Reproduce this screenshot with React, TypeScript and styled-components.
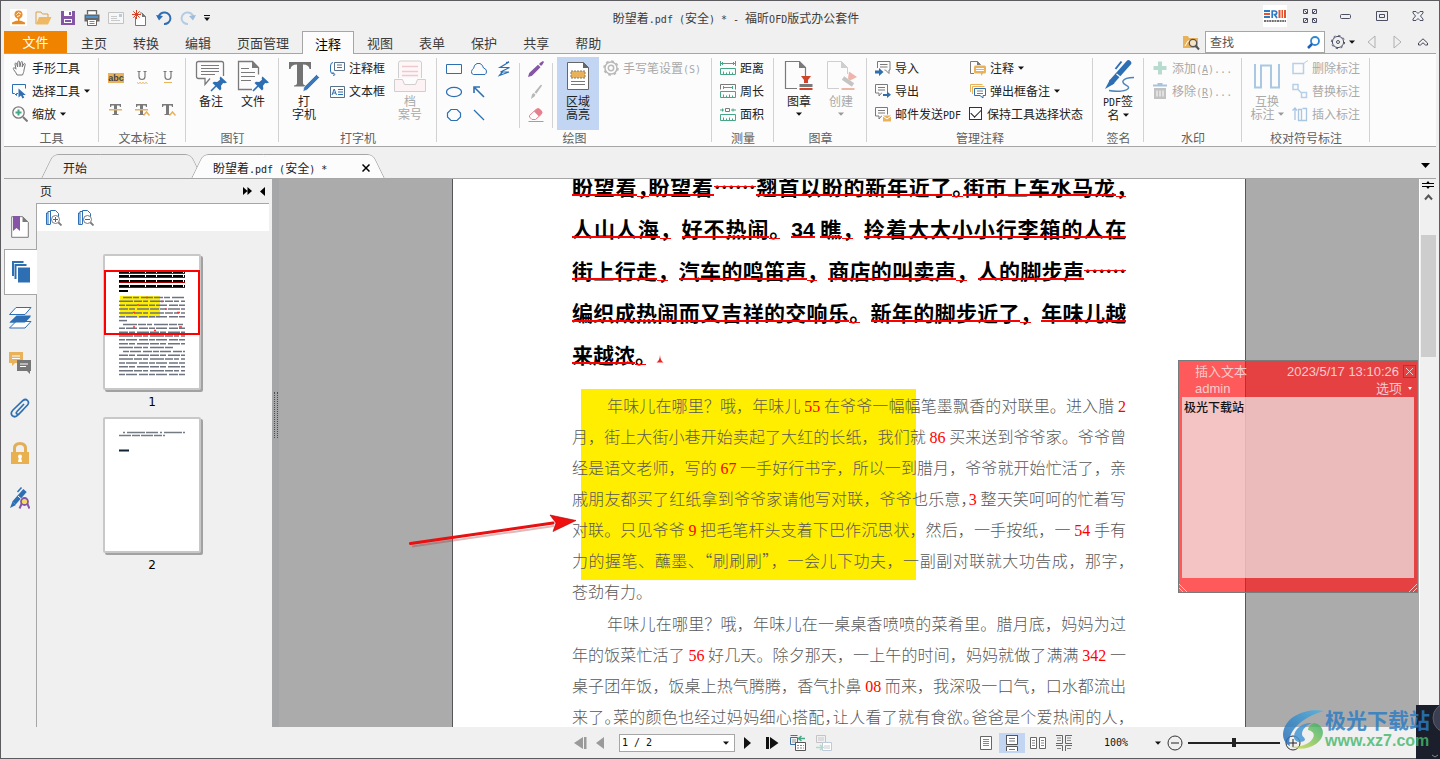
import React from "react";
import styled, { createGlobalStyle, css } from "styled-components";

const BLUE = "#2e6fb4";
const GRAY = "#7a7a7a";
const GOLD = "#e9b25a";
const GREEN = "#46a688";
const PURPLE = "#8656a6";
const RED = "#d0452a";
const LINE = "#a6a6a6";
const CHROME = "#f0f0f0";

const Global = createGlobalStyle`
  * { box-sizing: border-box; }
  html, body { margin: 0; height: 100%; }
  body {
    font-family: "Noto Sans CJK SC", "Noto Sans", sans-serif;
    font-size: 12px;
    line-height: 16px;
    color: #222;
    overflow: hidden;
  }
  button, input, select, textarea { font: inherit; color: inherit; margin: 0; }
  button { background: none; border: 0; padding: 0; cursor: default; }
  svg { display: block; flex: none; }
`;

/* ---------- text and icon helpers ---------- */

const Half = styled.span`
  font-family: "DejaVu Sans Mono", monospace;
  font-size: 10px;
  line-height: 1;
  white-space: pre;
`;

const Mixed = ({ children }: { children: string }) => (
  <span>
    {children.split(/([\x20-\x7e]+)/).map((part, i) =>
      i % 2 ? <Half key={i}>{part}</Half> : part
    )}
  </span>
);

type IconProps = { w?: number; h?: number; children: React.ReactNode };
const Icon = ({ w = 16, h = w, children }: IconProps) => (
  <svg width={w} height={h} viewBox={`0 0 ${w} ${h}`} fill="none" aria-hidden="true">
    {children}
  </svg>
);

const Caret = ({ color = "#111" }: { color?: string }) => (
  <Icon w={6} h={4}>
    <path d="M0 .5h6L3 3.8z" fill={color} />
  </Icon>
);

/* ---------- window frame ---------- */

const Window = styled.div`
  position: relative;
  display: flex;
  flex-direction: column;
  height: 100vh;
  padding: 0 3px;
  border: 1px solid #5c5c60;
  background: ${CHROME};
`;

const TitleBar = styled.header`
  display: flex;
  align-items: center;
  justify-content: space-between;
  height: 30px;
  padding-left: 6px;
  color: #3c3c3c;
`;

const QuickBar = styled.div`
  display: flex;
  align-items: center;
  gap: 8px;
  flex: 1;
  padding-top: 3px;
`;

const Title = styled.h1`
  margin: 0;
  padding: 3px 0 0 26px;
  font-size: 12px;
  font-weight: 400;
  white-space: nowrap;
`;

const WindowButtons = styled.div`
  display: flex;
  justify-content: flex-end;
  flex: 1;
  button {
    display: grid;
    place-items: center;
    width: 36px;
    height: 28px;
  }
`;

const Brand = styled.div`
  display: grid;
  place-items: center;
  width: 24px;
  height: 22px;
  margin: 3px 5px 0 0;
  background: #fff;
`;

/* ---------- menu tabs ---------- */

const MenuBar = styled.nav`
  display: flex;
  height: 23px;
  border-bottom: 1px solid ${LINE};
`;

const FileTab = styled.button`
  && { color: #fff; }
  width: 63px;
  height: 22px;
  margin-right: 1px;
  background: #f08300;
  font-size: 13px;
`;

const MenuTab = styled.button<{ $active?: boolean }>`
  height: 22px;
  padding: 2px 13px 0;
  font-size: 13px;
  color: #3c3c3c;
  white-space: nowrap;
  ${(p) =>
    p.$active &&
    css`
      height: 23px;
      padding: 1px 12px 0;
      background: #fcfcfc;
      border: 1px solid ${LINE};
      border-bottom: 0;
      color: #000;
    `}
`;

const SearchArea = styled.div`
  display: flex;
  align-items: center;
  margin-left: auto;
`;

const SearchBox = styled.label`
  display: flex;
  align-items: center;
  width: 120px;
  height: 22px;
  margin: 0 5px;
  padding: 0 4px;
  background: #fff;
  border: 1px solid ${LINE};
  input {
    flex: 1;
    min-width: 0;
    padding: 0;
    border: 0;
    outline: 0;
    background: none;
  }
  input::placeholder { color: #555; }
`;

const Nav = styled.button<{ $w?: number }>`
  display: grid;
  place-items: center;
  width: ${(p) => p.$w ?? 26}px;
  height: 20px;
`;

/* ---------- ribbon ---------- */

const RibbonBar = styled.section`
  display: flex;
  height: 93px;
  padding-top: 3px;
  background: #fcfcfc;
  border-bottom: 1px solid ${LINE};
`;

const GroupBox = styled.div<{ $w: number }>`
  display: flex;
  flex-direction: column;
  flex: none;
  width: ${(p) => p.$w}px;
  background: linear-gradient(#d2d2d2, #d2d2d2) right 0 top 1px / 1px 84px no-repeat;
`;

const GroupBody = styled.div`
  display: flex;
  height: 73px;
  padding-left: 4px;
`;

const GroupLabel = styled.div`
  color: #606060;
  text-align: center;
`;

const Group = ({ w, label, children }: { w: number; label: string; children: React.ReactNode }) => (
  <GroupBox $w={w}>
    <GroupBody>{children}</GroupBody>
    <GroupLabel>{label}</GroupLabel>
  </GroupBox>
);

const Column = styled.div<{ $w?: number; $pad?: number }>`
  display: flex;
  flex-direction: column;
  width: ${(p) => (p.$w ? `${p.$w}px` : "auto")};
  padding-left: ${(p) => p.$pad ?? 4}px;
`;

const RowButton = styled.button`
  display: flex;
  align-items: center;
  gap: 4px;
  height: 23px;
  padding-bottom: 1px;
  white-space: nowrap;
  &:disabled { color: #a9a9a9; }
`;

const Row = ({
  icon,
  text,
  caret,
  disabled,
}: {
  icon: React.ReactNode;
  text: React.ReactNode;
  caret?: boolean;
  disabled?: boolean;
}) => (
  <RowButton disabled={disabled}>
    {icon}
    <span>{text}</span>
    {caret && <Caret />}
  </RowButton>
);

const Big = styled.button<{ $on?: boolean }>`
  display: flex;
  flex-direction: column;
  align-items: center;
  width: 42px;
  height: 74px;
  padding-top: 3px;
  line-height: 13px;
  background: ${(p) => (p.$on ? "#c2d5f2" : "transparent")};
  &:disabled { color: #a9a9a9; }
  > svg:first-child { margin-bottom: 2px; }
`;

const Inline = styled.span`
  display: flex;
  align-items: center;
  gap: 3px;
  min-height: 13px;
`;

const IconGrid = styled.div<{ $cols: number; $row: number; $col?: number; $top?: number }>`
  display: grid;
  grid-template-columns: repeat(${(p) => p.$cols}, ${(p) => p.$col ?? 26}px);
  grid-auto-rows: ${(p) => p.$row}px;
  align-content: start;
  padding-top: ${(p) => p.$top ?? 0}px;
  button { display: grid; place-items: center; }
`;

const Divider = styled.div`
  width: 1px;
  height: 65px;
  margin: 6px 3px 0;
  background: #d2d2d2;
`;

const Check = styled.label`
  display: flex;
  align-items: center;
  gap: 5px;
  height: 23px;
  margin-left: -1px;
  padding-bottom: 2px;
  white-space: nowrap;
  input {
    appearance: none;
    display: grid;
    place-items: center;
    width: 13px;
    height: 13px;
    border: 1px solid #333;
    background: #fff;
  }
  input:checked::after {
    content: "";
    width: 9px;
    height: 5px;
    margin-top: -3px;
    border: solid #222;
    border-width: 0 0 1px 1px;
    transform: rotate(-45deg);
  }
`;

/* ---------- document tabs ---------- */

const DocTabs = styled.div`
  display: flex;
  align-items: flex-end;
  height: 32px;
  padding-left: 43px;
  border-bottom: 1px solid ${LINE};
`;

const DocTab = styled.div<{ $active?: boolean; $w: number }>`
  position: relative;
  display: flex;
  align-items: center;
  justify-content: space-between;
  width: ${(p) => p.$w}px;
  height: 24px;
  padding: 3px 9px 0 16px;
  z-index: ${(p) => (p.$active ? 1 : 0)};
  isolation: isolate;
  &::before,
  &::after {
    content: "";
    position: absolute;
    z-index: -1;
    top: 0;
    bottom: 0;
    width: 60%;
    background: ${(p) => (p.$active ? "#fcfcfc" : CHROME)};
    border-top: 1px solid ${LINE};
  }
  &::before {
    left: 0;
    border-left: 1px solid ${LINE};
    border-top-left-radius: 6px;
    transform: skewX(-26deg);
  }
  &::after {
    right: 0;
    border-right: 1px solid ${LINE};
    border-top-right-radius: 6px;
    transform: skewX(26deg);
  }
`;

const TabMenu = styled.button`
  margin: 0 6px 10px auto;
`;

/* ---------- main area ---------- */

const Main = styled.main`
  display: flex;
  flex: 1;
  min-height: 0;
`;

const Rail = styled.nav`
  display: flex;
  flex-direction: column;
  width: 32px;
  padding-top: 25px;
`;

const RailButton = styled.button<{ $active?: boolean }>`
  display: grid;
  place-items: center;
  height: 45px;
  ${(p) =>
    p.$active &&
    css`
      position: relative;
      z-index: 1;
      width: 33px;
      height: 46px;
      background: #fff;
      border: 1px solid ${LINE};
      border-right: 0;
    `}
`;

const Panel = styled.aside`
  display: flex;
  flex-direction: column;
  width: 236px;
  padding-right: 3px;
`;

const PanelHead = styled.div`
  display: flex;
  align-items: center;
  height: 24px;
  padding: 0 4px;
  span { flex: 1; }
  button { margin-left: 8px; }
`;

const PanelBody = styled.div`
  flex: 1;
  border: solid ${LINE};
  border-width: 1px 0 0 1px;
`;

const PanelTools = styled.div`
  display: flex;
  align-items: center;
  gap: 16px;
  height: 27px;
  padding-left: 9px;
  background: #fff;
`;

const Thumbs = styled.div`
  display: flex;
  flex-direction: column;
  align-items: center;
  padding: 23px 2px 0 0;
`;

const Thumb = styled.figure`
  margin: 0;
  font-family: "DejaVu Sans", sans-serif;
  text-align: center;
  figcaption { height: 27px; line-height: 24px; color: #000; }
`;

const ThumbPage = styled.div`
  position: relative;
  width: 98px;
  height: 136px;
  background: #fff;
  border: 2px solid #c8c8c8;
  border-radius: 2px;
  box-shadow: 2px 2px 0 #a2a2a2;
`;

const ViewFrame = styled.div`
  position: absolute;
  left: -1px;
  top: 14px;
  width: 96px;
  height: 65px;
  border: 2px solid #f00;
`;

const Splitter = styled.div`
  display: flex;
  align-items: center;
  justify-content: center;
  width: 7px;
  padding-bottom: 76px;
  background: #a5a6a8;
`;

const Grip = styled.div`
  width: 4px;
  height: 46px;
  border: dotted #4c4d51;
  border-width: 0 1px;
`;

const Viewer = styled.div`
  position: relative;
  flex: 1;
  min-width: 0;
  overflow: hidden;
  background: #ababab;
`;

const Page = styled.article`
  position: relative;
  width: 794px;
  min-height: 1123px;
  margin: -14px auto 0;
  padding: 0 119px;
  background: #fff;
  border: solid #55565a;
  border-width: 0 1px;
`;

const Highlight = styled.div`
  position: absolute;
  left: 128px;
  top: 224px;
  width: 335px;
  height: 191px;
  background: #ffee00;
`;

const Arrow = styled.div`
  position: absolute;
  left: -44px;
  top: 347px;
`;

const Lead = styled.p`
  margin: 0 0 15px;
  font-size: 21px;
  font-weight: 700;
  line-height: 42px;
  color: #000;
`;

const Body = styled.p`
  position: relative;
  margin: 0 0 1px;
  font-size: 16px;
  font-weight: 300;
  line-height: 31px;
  color: #585858;
`;

const Line = styled.span<{ $indent?: boolean; $end?: boolean }>`
  display: block;
  white-space: nowrap;
  padding-left: ${(p) => (p.$indent ? 35 : 0)}px;
  text-align: ${(p) => (p.$end ? "left" : "justify")};
  text-align-last: ${(p) => (p.$end ? "left" : "justify")};
`;

const Glyph = styled.span<{ $kind: "word" | "stop" | "tight" | "dots" }>`
  position: relative;
  &::after {
    content: "";
    position: absolute;
    left: 0;
    right: ${(p) => (p.$kind === "stop" ? "50%" : "0")};
    bottom: ${(p) => (p.$kind === "word" ? 5 : p.$kind === "dots" ? 14 : 4)}px;
    height: ${(p) => (p.$kind === "word" ? 2 : 1)}px;
    background: #f00;
  }
`;

const TightStop = styled.span`
  font-feature-settings: "halt";
`;

const BoldNumber = styled.span`
  font-family: "Liberation Sans", Arial, sans-serif;
  font-weight: 700;
  line-height: 1;
`;

const Num = styled.span`
  font-family: "Liberation Serif", "Times New Roman", serif;
  font-weight: 400;
  line-height: 1;
  color: #f00;
`;

const InsertMark = styled.span`
  display: inline-block;
  line-height: 1;
`;

const LeadLine = ({ text, end, tight }: { text: string; end?: boolean; tight?: boolean }) => (
  <Line $end={end}>
    {(text.match(/\d+| |./g) || []).map((c, i) => {
      if (c === " ") return " ";
      const stop = /[，。]/.test(c);
      const kind = stop ? (tight ? "tight" : "stop") : c === "…" ? "dots" : "word";
      const inner = /\d/.test(c) ? (
        <BoldNumber>{c}</BoldNumber>
      ) : kind === "tight" ? (
        <TightStop>{c}</TightStop>
      ) : (
        c
      );
      return (
        <Glyph key={i} $kind={kind}>
          {inner}
        </Glyph>
      );
    })}
    {end && (
      <InsertMark>
        <Icon w={8} h={8}>
          <path d="M4 0c.4 4 1.2 6 3.5 7.5h-7C2.8 6 3.6 4 4 0z" fill="#e22" />
        </Icon>
      </InsertMark>
    )}
  </Line>
);

/* A tilde before a punctuation mark sets it half-width. */
const TextLine = ({ text, indent, end }: { text: string; indent?: boolean; end?: boolean }) => (
  <Line $indent={indent} $end={end}>
    {(text.match(/\d+|~.|[^\d~]+/g) || []).map((part, i) =>
      /^\d/.test(part) ? (
        <Num key={i}>{part}</Num>
      ) : part[0] === "~" ? (
        <TightStop key={i}>{part[1]}</TightStop>
      ) : (
        part
      )
    )}
  </Line>
);

/* ---------- sticky note ---------- */

const Note = styled.section`
  position: absolute;
  right: 1px;
  top: 181px;
  display: flex;
  flex-direction: column;
  width: 240px;
  height: 233px;
  padding: 2px 3px 14px;
  border: 1px solid #777b7b;
  background: rgba(255, 20, 22, 0.7);
  color: #f6cccc;
  font-family: "Liberation Sans", "Noto Sans CJK SC", sans-serif;
  font-size: 13px;
`;

const NoteRow = styled.div`
  display: flex;
  align-items: center;
  height: 17px;
  padding-left: 13px;
  span { flex: 1; }
  button { display: flex; align-items: center; gap: 6px; margin-right: 2px; }
`;

const CloseBox = styled.button`
  && { margin: 0 -2px 0 4px; padding: 1px; border: 1px solid #6e5050; }
`;

const NoteText = styled.textarea`
  flex: 1;
  padding: 2px;
  border: 0;
  outline: 0;
  resize: none;
  background: rgba(238, 255, 255, 0.64);
  && {
    color: #111;
    font: 500 12px/16px "Noto Sans CJK SC", sans-serif;
  }
`;

const Corners = styled.div`
  position: absolute;
  left: 0;
  right: 0;
  bottom: 0;
  display: flex;
  justify-content: space-between;
  svg:first-child { transform: scaleX(-1); }
`;

/* ---------- scroll bar ---------- */

const Scroll = styled.div`
  display: flex;
  flex-direction: column;
  align-items: center;
  width: 17px;
  background: ${CHROME};
  border-left: 1px solid #fff;
  > svg { margin-top: 2px; }
`;

const ScrollThumb = styled.div`
  width: 15px;
  height: 122px;
  margin-top: 32px;
  background: #cdcdcd;
`;

/* ---------- status bar ---------- */

const Status = styled.footer`
  display: flex;
  align-items: center;
  justify-content: space-between;
  height: 31px;
  padding: 0 135px 0 570px;
`;

const StatusGroup = styled.div`
  display: flex;
  align-items: center;
`;

const NextButton = styled.button`
  margin-right: 7px;
`;

const PageSelect = styled.label`
  display: flex;
  align-items: center;
  width: 116px;
  height: 18px;
  margin: 0 9px 0 6px;
  padding: 0 5px 0 2px;
  background: #fff;
  border: 1px solid ${LINE};
`;

const Select = styled.select`
  appearance: none;
  flex: 1;
  border: 0;
  outline: 0;
  padding: 0;
  background: none;
  && {
    font-family: "DejaVu Sans Mono", monospace;
    font-size: 10px;
    color: #111;
  }
`;

const ZoomSelect = styled.label`
  display: flex;
  align-items: center;
  width: 57px;
  margin: 0 6px 0 27px;
`;

const ModeButton = styled.button<{ $on?: boolean }>`
  display: grid;
  place-items: center;
  width: 26px;
  height: 20px;
  background: ${(p) => (p.$on ? "#c2d5f2" : "transparent")};
`;

const Slider = styled.input`
  appearance: none;
  width: 92px;
  height: 12px;
  margin: 0 5px;
  background: linear-gradient(#222, #222) center / 100% 2px no-repeat;
  &::-webkit-slider-thumb {
    appearance: none;
    width: 4px;
    height: 9px;
    background: #222;
  }
`;

/* ---------- watermark ---------- */

const Dock = styled.div`
  position: absolute;
  right: -1px;
  bottom: -1px;
  width: 24px;
  height: 54px;
  overflow: hidden;
  background: #1b1f2c;
  z-index: 2;
`;

const Watermark = styled.div`
  position: absolute;
  right: 9px;
  bottom: 6px;
  display: flex;
  align-items: center;
  z-index: 3;
  white-space: nowrap;
  opacity: 0.82;
  strong {
    display: block;
    font-size: 21px;
    line-height: 22px;
    color: #2b7cc4;
  }
  em {
    display: block;
    font: 700 16px/22px "Liberation Sans", Arial, sans-serif;
    color: #45b86c;
  }
`;

/* ---------- icons ---------- */

const note = (x = 0, color = GRAY) => (
  <path
    d={`M${x + 1.5} 1.5h12v8.5h-6l-2.5 3v-3h-3.5z M${x + 4} 4.5h7 M${x + 4} 7h7`}
    stroke={color}
  />
);

const noteFlipped = (
  <path d="M2.500 8V1.500h12.500v8.500h-1v3.500l-3.500-3.500H9.500 M5 4.500h7.500 M5 7h7.500" stroke={GRAY} />
);

const pin = (
  <g fill={BLUE}>
    <path d="M25.500 16.500l6.500 6-2.200.8-1.600-.2-2.200 2.600.3 3.300-1.300 1.500-7.500-7.500 1.500-1.300 3.200.4 2.800-2.300-.3-1.800z" />
    <path d="M21 26l-5 5" stroke={BLUE} strokeWidth="1.600" />
  </g>
);

const Ruler = ({ kind }: { kind: number }) => (
  <Icon>
    <path d="M.5 8.500h15v6H.5z M3.500 11.500v3 M6.500 12.500v2 M9.500 11.500v3 M12.500 12.500v2" stroke={GREEN} />
    {kind === 0 && <path d="M.5 1v5 M15.500 1v5 M1 3.500h14 M3 2L1.500 3.500 3 5 M13 2l1.500 1.500L13 5" stroke={GREEN} />}
    {kind === 1 && (
      <>
        <path d="M.5 6.500v-5h15v5" stroke={GRAY} />
        <path d="M3 4.500h10 M3.500 3v3 M12.500 3v3" stroke={GREEN} />
      </>
    )}
    {kind === 2 && (
      <>
        <path d="M5.500 2.500h4v3h-4z" stroke={GRAY} />
        <path d="M0 4h4 M2.500 2.500v3 M11 4h5 M13 2.500v3" stroke={GREEN} />
      </>
    )}
  </Icon>
);

const QuickIcons = () => (
  <>
    <button aria-label="应用">
      <Icon w={17} h={17}>
        <path d="M0 0h17v17H0z" fill="#fff" />
        <path d="M4.500 5.500a4 4 0 018 0c0 2-1 4-4 4.500-3-.5-4-2.500-4-4.500z" fill="#ec8f2c" />
        <path d="M6.500 5.500l2-2 2.500 1.500M7 7.500l3-1" stroke="#fff" />
        <path d="M8 9h1.500v3H8z M2 13.500l4-1.700h5l4 1.700v1.800H2z" fill="#e88a24" />
      </Icon>
    </button>
    <button aria-label="打开">
      <Icon w={17} h={16}>
        <path d="M1 14V2h5l1.500 2H13v3" stroke="#d9a04a" />
        <path d="M4 7h12.500L13 14.500H1z" fill="#efb963" />
      </Icon>
    </button>
    <button aria-label="保存">
      <Icon>
        <path d="M1 1h14v14H1z" fill={PURPLE} />
        <path d="M4 1h8v5H4z M4 9h8v4H4z" fill="#fff" />
        <path d="M9 2h2v3H9z M5 10h6v2H5z" fill={PURPLE} />
      </Icon>
    </button>
    <button aria-label="打印">
      <Icon>
        <path d="M3.500 4.500V.7h9v3.800" stroke="#666" strokeWidth="1.300" fill="#fff" />
        <path d="M.5 4.500h15v7H.5z" fill="#666" />
        <path d="M2 6h12v2H2z" fill="#4d93cf" />
        <path d="M3.500 9.500h9v6h-9z" fill="#fff" stroke="#666" />
        <path d="M5.500 11.500h5 M5.500 13.500h5" stroke="#4d93cf" />
      </Icon>
    </button>
    <button aria-label="邮件">
      <Icon>
        <path d="M.5 2.500h15v11H.5z" stroke="#c3c3c3" fill="#f7f7f7" />
        <path d="M3 6.500h6 M3 8.500h6 M3 10.500h9" stroke="#c9c9c9" />
        <path d="M11 4h3v3h-3z" fill="#b4cbe4" />
      </Icon>
    </button>
    <button aria-label="新建">
      <Icon>
        <path d="M3.500 7v8.500h10v-9L10 3H8" stroke="#777" fill="#fff" />
        <path d="M10 3v4h4z" fill="#777" />
        <path d="M4.500 0v9 M0 4.500h9 M1.300 1.300l6.400 6.400 M7.700 1.300L1.300 7.700" stroke={RED} />
      </Icon>
    </button>
    <button aria-label="撤销">
      <Icon>
        <path d="M2.500 7.500A6 5.800 0 118 14" stroke={BLUE} strokeWidth="2" />
        <path d="M0 5l7 1-4 4.500z" fill={BLUE} />
      </Icon>
    </button>
    <button aria-label="重做">
      <Icon>
        <path d="M13.500 7.500A6 5.800 0 108 14" stroke="#b5cbe3" strokeWidth="2" />
        <path d="M16 5L9 6l4 4.500z" fill="#9dbcdc" />
      </Icon>
    </button>
    <button aria-label="自定义">
      <Icon w={6} h={6}>
        <path d="M0 .5h6" stroke="#111" />
        <path d="M0 2.500h6L3 6z" fill="#111" />
      </Icon>
    </button>
  </>
);

const TIcon = ({ strike, hat }: { strike?: boolean; hat?: boolean }) => (
  <Icon>
    <path d="M2 2h11v3h-1l-.5-1.500H9V12h1.500v1h-6v-1H6V3.500H3.500L3 5H2z" fill={GRAY} />
    {strike && <path d="M1 7h13v1.500H1z" fill={GOLD} />}
    {hat && <path d="M9.500 13.500l3-3.500 3 3.500" stroke={GOLD} strokeWidth="1.500" />}
  </Icon>
);

const UIcon = ({ wavy }: { wavy?: boolean }) => (
  <Icon>
    <path d="M5 1.500v5c0 4 6 4 6 0v-5 M3.500 1.500h3 M9.500 1.500h3" stroke={GRAY} strokeWidth="1.200" />
    {wavy ? (
      <path d="M3 12.500l1.500 1 1.500-1 1.500 1 1.500-1 1.500 1 1.500-1 1.500 1" stroke={GOLD} />
    ) : (
      <path d="M4 12.500h8" stroke={GOLD} />
    )}
  </Icon>
);

const MarkWord = styled.span`
  width: 16px;
  background: ${GOLD};
  color: #444;
  font: 700 9px/10px "Liberation Sans", Arial, sans-serif;
`;

/* ---------- ribbon content ---------- */

const Ribbon = () => (
  <RibbonBar>
    <Group w={95} label="工具">
      <Column>
        <Row
          text="手形工具"
          icon={
            <Icon>
              <path
                d="M5 15C4 12 1 9.500 1.200 8.300c.5-1 1.800-.5 2.800.9L3 4c0-1.300 1.500-1.300 1.800 0l.8 3L5.800 2c.2-1.200 1.700-1.200 1.800 0l.3 4.800L9 2.200c.3-1.100 1.700-.8 1.600.3L10.200 7l1.500-3c.6-1 1.800-.5 1.500.6L12 10c0 2-1 3.500-1.500 5z"
                stroke="#777"
              />
            </Icon>
          }
        />
        <Row
          text="选择工具"
          caret
          icon={
            <Icon>
              <path d="M6 10.500H4.500v2l-2-2H.5v-9h13v4" stroke={BLUE} />
              <path d="M6.500 5.500v9l2.500-2 1.500 3 1.800-1-1.500-2.500h3z" fill={BLUE} />
            </Icon>
          }
        />
        <Row
          text="缩放"
          caret
          icon={
            <Icon>
              <circle cx="6.500" cy="6.500" r="5.700" stroke={GRAY} strokeWidth="1.300" />
              <path d="M11 11l4.500 4.500" stroke={GRAY} strokeWidth="2" />
              <path d="M6.500 3.500v6 M3.500 6.500h6" stroke={GREEN} strokeWidth="2" />
            </Icon>
          }
        />
      </Column>
    </Group>

    <Group w={87} label="文本标注">
      <IconGrid $cols={3} $row={32} $top={5}>
        <button aria-label="高亮"><MarkWord>abc</MarkWord></button>
        <button aria-label="波浪线"><UIcon wavy /></button>
        <button aria-label="下划线"><UIcon /></button>
        <button aria-label="删除线"><TIcon strike /></button>
        <button aria-label="替换"><TIcon strike hat /></button>
        <button aria-label="插入"><TIcon hat /></button>
      </IconGrid>
    </Group>

    <Group w={93} label="图钉">
      <Big>
        <Icon w={32}>
          <path d="M15 18.500l-5 6v-6h-6.500q-2 0-2-2v-13q0-2 2-2h23q2 0 2 2v12.500" stroke={GRAY} strokeWidth="1.300" />
          <path d="M6 5.500h18 M6 8.500h18 M6 11.500h18 M6 14.500h14" stroke={GRAY} />
          {pin}
        </Icon>
        备注
      </Big>
      <Big>
        <Icon w={32}>
          <path d="M15 29.500H1.500v-28h14l6 6v7" stroke={GRAY} strokeWidth="1.300" />
          <path d="M15 1v7h7z" fill={GRAY} />
          <path d="M4 8.500h8 M4 12.500h14 M4 16.500h14 M4 20.500h10" stroke={GRAY} />
          {pin}
        </Icon>
        文件
      </Big>
    </Group>

    <Group w={158} label="打字机">
      <Big>
        <Icon w={32}>
          <path d="M1 2h22v7h-1.500Q21 4.500 15 4.500V23q0 2 3 2.500v1H6v-1q3-.5 3-2.500V4.500Q3 4.500 2.500 9H1z" fill="#737373" />
          <path d="M28.500 14.500l3 3L19 30l-4 1.500 1-4.500z" fill="#3b78ba" stroke="#fff" strokeWidth=".6" />
        </Icon>
        打<br />字机
      </Big>
      <Column $w={64} $pad={5}>
        <RowButton>
          <Icon w={15}>
            <path d="M4.500 1.500h10v8h-10z M7 4h5 M7 6.500h5" stroke="#5a6f88" />
            <path d="M3 1.500Q.5 1.500.5 5v5q0 3 3.500 3M2.500 11L5 13.500 2.500 15.500" stroke={BLUE} />
          </Icon>
          注释框
        </RowButton>
        <RowButton>
          <Icon w={15}>
            <path d="M.5 2.500h14v11H.5z" stroke="#5a6f88" />
            <path d="M2 11l2.200-6L6.500 11M3 9h3 M8 5.500h5 M8 8h5 M8 10.500h5" stroke={BLUE} />
          </Icon>
          文本框
        </RowButton>
      </Column>
      <Big disabled>
        <Icon w={32}>
          <path d="M4.500 18V3q0-2 2-2h19q2 0 2 2v15" stroke="#cfcfcf" fill="#fdf7f8" />
          <path d="M8 6.500h16 M8 11.500h16 M8 15.500h16" stroke="#f0c6cf" strokeWidth="1.500" />
          <path d="M.5 19.500h8l2 5h11l2-5h8v12H.5z" stroke="#cfcfcf" fill="#fdf2f4" />
        </Icon>
        档<br />案号
      </Big>
    </Group>

    <Group w={275} label="绘图">
      <IconGrid $cols={3} $row={23} $col={25}>
        <button aria-label="矩形"><Icon><path d="M.5 3.500h15v9H.5z" stroke={BLUE} /></Icon></button>
        <button aria-label="云形">
          <Icon><path d="M2.500 13.500Q0 13 .5 10.500 1 8 2.500 7.500 3 3.500 6 2.500h3q3 1.500 3.500 4.500 2.500.5 3 3 .2 2.500-1.500 3.500z" stroke={BLUE} /></Icon>
        </button>
        <button aria-label="折线">
          <Icon><path d="M10 1.500l3-.5-9 5.500h9.500L4.500 11h8.500L3.500 14.500l3-3.500" stroke={BLUE} strokeWidth="1.200" /></Icon>
        </button>
        <button aria-label="椭圆"><Icon><ellipse cx="8" cy="8" rx="7.500" ry="4.700" stroke={BLUE} strokeWidth="1.200" /></Icon></button>
        <button aria-label="箭头"><Icon><path d="M13 13L4 4M3 9V3h6" stroke={BLUE} strokeWidth="1.600" /></Icon></button>
        <span />
        <button aria-label="多边形"><Icon><path d="M5 2.500h6L14.500 6v4L11 13.500H5L1.500 10V6z" stroke={BLUE} strokeWidth="1.200" /></Icon></button>
        <button aria-label="直线"><Icon><path d="M3 3l10 10" stroke={BLUE} strokeWidth="1.200" /></Icon></button>
      </IconGrid>
      <Divider />
      <IconGrid $cols={1} $row={23}>
        <button aria-label="铅笔">
          <Icon><path d="M0 16l1.200-4L10 3.800l2.500 2.500L4 14.800z M11 3l1.500-1.500L15 0l1 1-1.500 2.500L13 5z" fill={PURPLE} /></Icon>
        </button>
        <button aria-label="画笔">
          <Icon><path d="M3 15l1-4.500 1.500-1.500 2 1.500-1 2z M6.500 8.200L12.500 1q1.200-.5 1.500.8L8.300 9.700z" fill="#b8b8b8" /></Icon>
        </button>
        <button aria-label="橡皮">
          <Icon>
            <path d="M1.500 8.500L8 2.500q2-1.500 3.500 0l2 2q1 1.500-.5 3L7.500 12.500H4L1.500 10z" stroke="#e77f8f" fill="#fff" />
            <path d="M6 4.500L8.500 2q2-1.500 3.500 0l2 2q1 1.500-.5 3L11 9.500z" fill="#e77f8f" />
            <path d="M.5 14.500h15" stroke="#e77f8f" />
          </Icon>
        </button>
      </IconGrid>
      <Divider />
      <Column $pad={1}>
        <Big $on>
          <Icon w={32}>
            <path d="M5.500 2.500h16l5 5v22h-21z" stroke="#666" fill="#fff" />
            <path d="M21 2v6h6z" fill="#666" />
            <path d="M9 11h14v7H9z" fill={GOLD} stroke="#8a7a5a" strokeDasharray="2 1" />
            <path d="M9 21.500h14 M9 24.500h14" stroke="#777" />
          </Icon>
          区域<br />高亮
        </Big>
      </Column>
      <Column $pad={4}>
        <Row
          disabled
          text={<Mixed>手写笔设置(S)</Mixed>}
          icon={
            <Icon>
              <circle cx="8" cy="8" r="6" stroke="#b9b9b9" strokeWidth="1.500" />
              <circle cx="8" cy="8" r="7" stroke="#b9b9b9" strokeWidth="1.600" strokeDasharray="2.700 2.800" />
              <circle cx="8" cy="8" r="2.700" stroke="#b9b9b9" strokeWidth="1.500" />
            </Icon>
          }
        />
      </Column>
    </Group>

    <Group w={62} label="测量">
      <Column>
        <Row icon={<Ruler kind={0} />} text="距离" />
        <Row icon={<Ruler kind={1} />} text="周长" />
        <Row icon={<Ruler kind={2} />} text="面积" />
      </Column>
    </Group>

    <Group w={93} label="图章">
      <Big>
        <Icon w={32}>
          <path d="M14 28.500H2.500v-27h14l6 6V16" stroke={GRAY} strokeWidth="1.200" />
          <path d="M16 1v7h7z" fill={GRAY} />
          <path d="M18 16h10l-3 4v3h-4v-3z M16.500 28h13v2h-13z" fill={RED} />
          <path d="M16.500 24h13v3h-13z" fill={GRAY} />
        </Icon>
        <Inline>图章</Inline>
        <Inline><Caret /></Inline>
      </Big>
      <Big disabled>
        <Icon w={32}>
          <path d="M14 28.500H2.500v-27h14l6 6V14" stroke="#cfcfcf" />
          <path d="M16 1v7h7z" fill="#cfcfcf" />
          <path d="M24 11.500l8 5.500-7 3.500-2-2z M16.500 28h13v2h-13z" fill="#eeb5ab" />
          <path d="M18 18l10 7" stroke="#c4c4c4" strokeWidth="4" />
        </Icon>
        <Inline>创建</Inline>
        <Inline><Caret color="#999" /></Inline>
      </Big>
    </Group>

    <Group w={226} label="管理注释">
      <Column $w={99}>
        <Row text="导入" icon={<Icon>{noteFlipped}<path d="M0 10.500h4V8l4.500 4L4 16v-2.500H0z" fill="#2f6fae" /></Icon>} />
        <Row text="导出" icon={<Icon>{note(-1)}<path d="M7 9h9v7H7z" fill="#fcfcfc" /><path d="M8 11h4V8.500l4 3.300-4 3.200v-2H8z" fill="#2f6fae" /></Icon>} />
        <Row
          text={<Mixed>邮件发送PDF</Mixed>}
          icon={<Icon>{note(-1)}<path d="M7 8.500h9V16H7z" fill="#fcfcfc" /><path d="M8 9.500h8v6H8z" fill={GOLD} /><path d="M8 10l4 3 4-3" stroke="#fff" /></Icon>}
        />
      </Column>
      <Column $pad={0}>
        <Row
          text="注释"
          caret
          icon={
            <Icon>
              <path d="M4 13.500H.5V1.500h7l3 3" stroke={GRAY} />
              <path d="M7 1v4h4z" fill={GRAY} />
              <path d="M4 7q0-1.500 1.500-1.500h9Q16 5.500 16 7v5q0 1.500-1.500 1.500H13l-2 2.500v-2.500H5.500Q4 13.500 4 12z" fill={GOLD} />
              <path d="M6 8.500h8 M6 10.500h8" stroke="#fff" />
            </Icon>
          }
        />
        <Row
          text="弹出框备注"
          caret
          icon={
            <Icon>
              <path d="M.5 9V1.500h12 M2.500 11V3.500h12" stroke={GOLD} />
              <path d="M4.500 5.500h11v7H13v2.500l-3-2.500H4.500z" stroke={BLUE} fill="#fff" />
              <path d="M7 8h6 M7 10.500h6" stroke={GRAY} />
            </Icon>
          }
        />
        <Check>
          <input type="checkbox" defaultChecked />
          保持工具选择状态
        </Check>
      </Column>
    </Group>

    <Group w={51} label="签名">
      <Big>
        <Icon w={32}>
          <path d="M26.500 3L10 21.500" stroke={BLUE} strokeWidth="5.500" strokeLinecap="round" />
          <path d="M14.500 14l5 4" stroke="#fcfcfc" strokeWidth="1.200" />
          <path d="M8 19.500l4.500 4L3 29z" fill={BLUE} />
          <path d="M19.500 1.500L13.500 9" stroke={BLUE} strokeWidth="2" />
          <path d="M7 30.500c8 1.500 18 1 19.500-2.500 1-3-7-3-5.500-7 1.500-3 6-3.500 11-3.500" stroke="#4d84bd" strokeWidth="1.500" />
        </Icon>
        <Inline><Mixed>PDF签</Mixed></Inline>
        <Inline>名<Caret /></Inline>
      </Big>
    </Group>

    <Group w={98} label="水印">
      <Column>
        <Row
          disabled
          text={<>添加<Half>(<u>A</u>)...</Half></>}
          icon={<Icon><path d="M8 1.500v13 M1.500 8h13" stroke="#b7dccf" strokeWidth="4" /></Icon>}
        />
        <Row
          disabled
          text={<>移除<Half>(<u>R</u>)...</Half></>}
          icon={
            <Icon>
              <path d="M1 2.500h14M5.500 1h5" stroke="#a9c3de" strokeWidth="2" />
              <path d="M2 5h12v11H2z" fill="#c2c2c2" />
              <path d="M5 7.500v6 M8 7.500v6 M11 7.500v6" stroke="#fff" />
            </Icon>
          }
        />
      </Column>
    </Group>

    <Group w={128} label="校对符号标注">
      <Big disabled>
        <Icon w={32}>
          <path d="M4 4v23.500h6V5.500h10v22h8V4" stroke="#aac7e4" strokeWidth="2" />
        </Icon>
        <Inline>互换</Inline>
        <Inline>标注<Caret color="#999" /></Inline>
      </Big>
      <Column>
        <Row disabled text="删除标注" icon={<Icon><path d="M1 3.500h10.500v10H1z" stroke="#b7cfe7" strokeWidth="1.500" /><path d="M11 4l4-3h1" stroke="#b7cfe7" /></Icon>} />
        <Row disabled text="替换标注" icon={<Icon><path d="M1 1.500h5v5H1z M9.500 9.500h5v5h-5z M6 6.500l3.500 3.500" stroke="#b7cfe7" strokeWidth="1.500" /></Icon>} />
        <Row disabled text="插入标注" icon={<Icon><path d="M3 14V3M.5 4.500L3 2l2 2.500M6.500 14.500V3.500h3v11zM9.500 14.500h5V2.500h-4" stroke="#a9c6e3" strokeWidth="1.300" /></Icon>} />
      </Column>
    </Group>
  </RibbonBar>
);

/* ---------- thumbnails ---------- */

const dashes = ["9 1 6 2 12 1", "14 1 8 1 5 2", "6 1 11 2 9 1"];

const FirstPage = () => (
  <Icon w={94} h={132}>
    <path d="M15 40h40v22H15z" fill="#ffee00" />
    {[16, 20, 25, 30].map((y) => (
      <g key={y}>
        <path d={`M14 ${y}h66`} stroke="#000" strokeWidth="2" strokeDasharray="10 1 15 1" />
        <path d={`M14 ${y + 1.5}h66`} stroke="#a00" />
      </g>
    ))}
    <path d="M14 35h9" stroke="#000" strokeWidth="2" />
    {Array.from({ length: 21 }, (_, i) => {
      const start = [0, 7, 14].includes(i) ? 18 : 14;
      const end = i === 6 ? 22 : i === 13 ? 68 : 80;
      return (
        <path
          key={i}
          d={`M${start} ${41.5 + i * 3.85}H${end}`}
          stroke="#6d7480"
          strokeWidth="1.500"
          strokeDasharray={dashes[i % 3]}
        />
      );
    })}
    <path d="M41 41.500h2 M56 45.500h2 M32 49h2 M60 53h2 M28 56.500h2 M72 56.500h3 M28 71h2 M74 71h3 M49 74.500h2" stroke="#f33" strokeWidth="1.500" />
  </Icon>
);

const SecondPage = () => (
  <Icon w={94} h={132}>
    <path d="M18 13.500h62" stroke="#757b83" strokeWidth="1.500" strokeDasharray="2 2 18 1 12 2" />
    <path d="M14 16.500h46" stroke="#757b83" strokeWidth="1.500" strokeDasharray="12 1 8 1" />
    <path d="M14 31.500h10" stroke="#123" strokeWidth="2" />
  </Icon>
);

const pagesIcon = (sign: React.ReactNode) => (
  <Icon>
    <path d="M.5 14.500V3h1.500M2 14.500V1.500h2.500" stroke={BLUE} />
    <path d="M.5 14.500h4" stroke={BLUE} />
    <path d="M4.500 14V.5h5l3 3V7" stroke={BLUE} />
    <circle cx="9.500" cy="9.500" r="4" fill="#fff" stroke={GRAY} />
    <path d="M12.500 12.500l3 3" stroke={GRAY} strokeWidth="1.800" />
    {sign}
  </Icon>
);

const Circle = ({ plus }: { plus?: boolean }) => (
  <Icon>
    <circle cx="8" cy="8" r="7" stroke="#333" />
    <path d={plus ? "M4 8h8M8 4v8" : "M4 8h8"} stroke="#222" />
  </Icon>
);

/* ---------- application ---------- */

export default function App() {
  return (
    <Window>
      <Global />
      <TitleBar>
        <QuickBar><QuickIcons /></QuickBar>
        <Title><Mixed>盼望着.pdf (安全) * - 福昕OFD版式办公套件</Mixed></Title>
        <WindowButtons>
          <Brand>
            <svg width="22" height="14" viewBox="0 0 22 14" role="img" aria-label="ERM">
              <path d="M0 1h6v2H0z" fill="#2b7cc4" />
              <path d="M0 4h6v2H0z" fill="#e3532d" />
              <path d="M0 7h6v2H0z" fill="#2b7cc4" />
              <path d="M8.200 9V2h2.500q2 0 2 1.700t-2 1.800H9.500M10.500 5.500L13 9" stroke="#2b7cc4" strokeWidth="1.700" fill="none" />
              <path d="M14.500 1h2v8h-2z M17.500 1h1.500v8h-1.500z M20 1h2v8h-2z" fill="#e3532d" />
              <path d="M0 12h22" stroke="#444" strokeWidth="1.500" strokeDasharray="2 .6" />
            </svg>
          </Brand>
          <button aria-label="全屏">
            <Icon w={14}>
              <path d="M.5.5h4v4h-4z M9.500.5h4v4h-4z M.5 9.500h4v4h-4z M9.500 9.500h4v4h-4z" stroke="#4d5064" />
              <path d="M4 4L1.500 1.500M10 4l2.500-2.500M4 10l-2.500 2.500M10 10l2.500 2.500" stroke="#4d5064" />
            </Icon>
          </button>
          <button aria-label="最小化"><Icon w={12}><rect x=".5" y="4.500" width="10" height="4" rx="1" stroke="#4d5064" /></Icon></button>
          <button aria-label="最大化"><Icon w={12}><path d="M.5 1.500h11v9H.5z M3.500 4.500h5v3h-5z" stroke="#4d5064" /></Icon></button>
          <button aria-label="关闭">
            <Icon w={12}><path d="M1 1.500h3l2 2 2-2h3v1.500L8.500 6 11 9v1.500H8l-2-2-2 2H1V9l2.500-3L1 3z" stroke="#4d5064" /></Icon>
          </button>
        </WindowButtons>
      </TitleBar>

      <MenuBar>
        <FileTab>文件</FileTab>
        {["主页", "转换", "编辑", "页面管理", "注释", "视图", "表单", "保护", "共享", "帮助"].map((t) => (
          <MenuTab key={t} $active={t === "注释"}>{t}</MenuTab>
        ))}
        <SearchArea>
          <Icon w={17}>
            <path d="M0 2h5l1 2h9v10H0z" fill={GOLD} />
            <path d="M2 12l3-5h4" stroke="#fff" />
            <circle cx="10" cy="9" r="3.700" fill="#f5e3c4" stroke="#555" strokeWidth="1.300" />
            <path d="M12.500 11.500l3.500 4" stroke="#555" strokeWidth="2" />
          </Icon>
          <SearchBox>
            <input type="text" placeholder="查找" aria-label="查找" />
            <Icon w={13}>
              <circle cx="8" cy="5" r="4" stroke="#2f86d4" strokeWidth="1.800" />
              <path d="M5 8L1 12" stroke="#1f5fae" strokeWidth="2.500" />
            </Icon>
          </SearchBox>
          <Icon>
            <circle cx="8" cy="8" r="5.600" stroke="#4d5064" />
            <circle cx="8" cy="8" r="6.600" stroke="#4d5064" strokeDasharray="2.200 3" />
            <circle cx="8" cy="8" r="1.500" stroke="#4d5064" />
          </Icon>
          <Nav $w={12} aria-label="设置"><Caret /></Nav>
          <Nav aria-label="后退"><Icon w={9} h={14}><path d="M8 1v12L1 7z" stroke="#b0b0b0" /></Icon></Nav>
          <Nav aria-label="前进"><Icon w={9} h={14}><path d="M1 1v12l7-6z" stroke="#b0b0b0" /></Icon></Nav>
          <Nav aria-label="收起"><Icon w={10} h={8}><path d="M.5 5L5 .8 9.500 5v2h-2L5 4.800 2.500 7h-2z" stroke="#44475a" /></Icon></Nav>
        </SearchArea>
      </MenuBar>

      <Ribbon />

      <DocTabs>
        <DocTab $w={150}>开始</DocTab>
        <DocTab $active $w={182}>
          <Mixed>盼望着.pdf (安全) *</Mixed>
          <button aria-label="关闭标签">
            <Icon w={8}><path d="M.5.5l7 7M7.500.5l-7 7" stroke="#000" strokeWidth="1.500" /></Icon>
          </button>
        </DocTab>
        <TabMenu aria-label="标签列表"><Icon w={9} h={5}><path d="M0 0h9L4.500 5z" fill="#000" /></Icon></TabMenu>
      </DocTabs>

      <Main>
        <Rail>
          <RailButton aria-label="书签">
            <Icon w={18} h={22}>
              <path d="M.7.700h11l5.600 5.500v15.100H.7z" stroke={GRAY} fill="#fff" />
              <path d="M11.500.500V6h5.500z" fill={GRAY} />
              <path d="M2 0h7v15l-3.500-3L2 15z" fill={PURPLE} />
            </Icon>
          </RailButton>
          <RailButton $active aria-label="页面">
            <Icon w={18} h={22}>
              <path d="M1 15V1h10.500M3.500 18V4h11" stroke={BLUE} strokeWidth="2" />
              <path d="M6 6.500h12v15H6z" fill={BLUE} />
            </Icon>
          </RailButton>
          <RailButton aria-label="图层">
            <Icon w={24}>
              <path d="M8.500 10.500h14.500L17 16.500H1.500z" fill={BLUE} />
              <path d="M8 15.500h15L17 22H1.500z" stroke={BLUE} fill="#fff" />
              <path d="M8.500 9.500h14.500L17 16.500H1.500z" fill={BLUE} />
              <path d="M8 1.500h15L17 8.500H1.500z" stroke={BLUE} fill="#fff" />
            </Icon>
          </RailButton>
          <RailButton aria-label="注释">
            <Icon w={22}>
              <path d="M0 0h14v11H6l-3 3v-3H0z" fill={GOLD} />
              <path d="M3 4h8M3 6.500h8" stroke="#fff" />
              <path d="M8 8h14v11h-1v3l-3-3H8z" fill="#777" />
              <path d="M11 12h8M11 14.500h6" stroke="#fff" />
            </Icon>
          </RailButton>
          <RailButton aria-label="附件">
            <Icon w={20}>
              <path d="M14 6l-7 7.500q-1.500 1.500 0 2.500t2.500-.5L17.500 7q2-2.500 0-4.500t-4.500 0L3 12q-3 3-.8 5.700 2.800 2.300 5.600-.5L13 12" stroke={BLUE} strokeWidth="1.700" />
            </Icon>
          </RailButton>
          <RailButton aria-label="安全">
            <Icon w={18} h={22}>
              <path d="M3.500 11V6.500q0-5 5.500-5t5.500 5V11" stroke="#e3ae58" strokeWidth="3" />
              <path d="M0 10h18v12H0z" fill="#e9b050" />
              <circle cx="9" cy="14.500" r="2" fill="#fff" />
              <path d="M8 15h2l1 5H7z" fill="#fff" />
            </Icon>
          </RailButton>
          <RailButton aria-label="签名">
            <Icon w={20} h={22}>
              <path d="M15 3.500L4 16" stroke={BLUE} strokeWidth="4.500" />
              <path d="M8 9l4 3.500" stroke="#fff" />
              <path d="M2.500 14.500L6 18l-6 3z" fill={BLUE} />
              <path d="M11.500.5L7.500 5" stroke={BLUE} strokeWidth="1.500" />
              <path d="M12 16l-2.500 5.500 M17 16l2.500 5.500" stroke={PURPLE} strokeWidth="2" />
              <circle cx="14.500" cy="14.500" r="3.500" fill="#f3d96b" stroke={PURPLE} strokeWidth="1.800" />
            </Icon>
          </RailButton>
        </Rail>

        <Panel>
          <PanelHead>
            <span>页</span>
            <button aria-label="展开"><Icon w={9} h={8}><path d="M0 0l4.500 4L0 8z M4.500 0L9 4 4.500 8z" fill="#000" /></Icon></button>
            <button aria-label="折叠"><Icon w={5} h={9}><path d="M5 0v9L0 4.500z" fill="#000" /></Icon></button>
          </PanelHead>
          <PanelBody>
            <PanelTools>
              <button aria-label="放大缩略图">{pagesIcon(<path d="M7 9.500h5M9.500 7v5" stroke={BLUE} />)}</button>
              <button aria-label="缩小缩略图">{pagesIcon(<path d="M7 9.500h5" stroke={BLUE} />)}</button>
            </PanelTools>
            <Thumbs>
              <Thumb>
                <ThumbPage><FirstPage /><ViewFrame /></ThumbPage>
                <figcaption>1</figcaption>
              </Thumb>
              <Thumb>
                <ThumbPage><SecondPage /></ThumbPage>
                <figcaption>2</figcaption>
              </Thumb>
            </Thumbs>
          </PanelBody>
        </Panel>

        <Splitter><Grip /></Splitter>

        <Viewer>
          <Page>
            <Highlight />
            <Lead>
              <LeadLine tight text="盼望着，盼望着……翘首以盼的新年近了。街市上车水马龙，" />
              <LeadLine text="人山人海，好不热闹。34 瞧，拎着大大小小行李箱的人在" />
              <LeadLine text="街上行走，汽车的鸣笛声，商店的叫卖声，人的脚步声……" />
              <LeadLine text="编织成热闹而又吉祥的交响乐。新年的脚步近了，年味儿越" />
              <LeadLine end text="来越浓。" />
            </Lead>
            <Body>
              <TextLine indent text="年味儿在哪里？哦，年味儿 55 在爷爷一幅幅笔墨飘香的对联里。进入腊 2" />
              <TextLine text="月，街上大街小巷开始卖起了大红的长纸，我们就 86 买来送到爷爷家。爷爷曾" />
              <TextLine text="经是语文老师，写的 67 一手好行书字，所以一到腊月，爷爷就开始忙活了，亲" />
              <TextLine text="戚朋友都买了红纸拿到爷爷家请他写对联，爷爷也乐意~，3 整天笑呵呵的忙着写" />
              <TextLine text="对联。只见爷爷 9 把毛笔杆头支着下巴作沉思状，然后，一手按纸，一 54 手有" />
              <TextLine text="力的握笔、蘸墨、“刷刷刷”，一会儿下功夫，一副副对联就大功告成，那字~，" />
              <TextLine end text="苍劲有力。" />
            </Body>
            <Body>
              <TextLine indent text="年味儿在哪里？哦，年味儿在一桌桌香喷喷的菜肴里。腊月底，妈妈为过" />
              <TextLine text="年的饭菜忙活了 56 好几天。除夕那天，一上午的时间，妈妈就做了满满 342 一" />
              <TextLine text="桌子团年饭，饭桌上热气腾腾，香气扑鼻 08 而来，我深吸一口气，口水都流出" />
              <TextLine text="来了~。菜的颜色也经过妈妈细心搭配~，让人看了就有食欲~。爸爸是个爱热闹的人~，" />
            </Body>
            <Arrow>
              <Icon w={170} h={38}>
                <path d="M3 34.500L145 14" stroke="#a33" strokeWidth="2" opacity=".35" />
                <path d="M1.500 31.500L144 11" stroke="#e81010" strokeWidth="3" strokeLinecap="round" />
                <path d="M167 8.500L141 3l6 8-3 8.500z" fill="#f01010" stroke="#a00" strokeWidth=".6" />
              </Icon>
            </Arrow>
          </Page>
          <Note>
            <NoteRow>
              <span>插入文本</span>
              2023/5/17 13:10:26
              <CloseBox aria-label="关闭便签">
                <Icon w={9}><path d="M1 1l7 7M8 1L1 8" stroke="#f8d0d0" /></Icon>
              </CloseBox>
            </NoteRow>
            <NoteRow>
              <span>admin</span>
              <button>选项<Icon w={4} h={3}><path d="M0 0h4L2 3z" fill="#fff" /></Icon></button>
            </NoteRow>
            <NoteText defaultValue="极光下载站" aria-label="便签内容" />
            <Corners>
              <Icon w={8}><path d="M0 8l8-8M4 8l4-4" stroke="#f6c6c6" /></Icon>
              <Icon w={8}><path d="M0 8l8-8M4 8l4-4" stroke="#f6c6c6" /></Icon>
            </Corners>
          </Note>
        </Viewer>

        <Scroll>
          <Icon w={12} h={8}><path d="M0 2.500h12M0 5.500h12" stroke="#000" /><path d="M6 0l2 2.500H4z M6 8l2-2.500H4z" fill="#000" /></Icon>
          <Icon w={9} h={12}><path d="M1 8.500l3.500-4 3.500 4" stroke="#555" strokeWidth="2" /></Icon>
          <ScrollThumb />
        </Scroll>
      </Main>

      <Status>
        <StatusGroup>
          <button aria-label="首页"><Icon w={13} h={12}><path d="M9 0v12L0 6z M10 0h2.500v12H10z" fill="#9a9a9a" /></Icon></button>
          <Nav aria-label="上一页"><Icon w={8} h={12}><path d="M8 0v12L0 6z" fill="#9a9a9a" /></Icon></Nav>
          <PageSelect>
            <Select aria-label="页码" defaultValue="1 / 2"><option>1 / 2</option><option>2 / 2</option></Select>
            <Caret />
          </PageSelect>
          <NextButton aria-label="下一页"><Icon w={8} h={12}><path d="M0 0v12l7-6z" fill="#111" /></Icon></NextButton>
          <Nav aria-label="末页"><Icon w={13} h={12}><path d="M0 0h3v12H0z M4 0v12l8.500-6z" fill="#111" /></Icon></Nav>
          <Nav aria-label="上一视图">
            <Icon>
              <path d="M.5.500h7M.5 2.500h7v7h-7z" stroke="#3b6fa5" />
              <path d="M2 5h4M2 7h4" stroke="#999" />
              <path d="M15 3.500H9M11.500 1L8.500 3.500l3 2.500" stroke={GREEN} strokeWidth="1.500" />
              <path d="M5.500 7.500h10v8h-10z" fill="#fff" stroke="#555" />
              <path d="M7 10.500h7M7 13h7" stroke="#888" strokeDasharray="2 1" />
            </Icon>
          </Nav>
          <Nav aria-label="下一视图">
            <Icon>
              <path d="M.5.500h9v7h-9z" stroke="#c4c4c4" />
              <path d="M2 3h6M2 5h6" stroke="#c9c9c9" />
              <path d="M6.500 7.500h9v8h-9z" fill="#fff" stroke="#bccbdc" />
              <path d="M8 11h6M8 13h6" stroke="#c9c9c9" />
              <path d="M0 12.500h6M4 10l3 2.500L4 15" stroke="#b0d8cb" strokeWidth="1.500" />
            </Icon>
          </Nav>
        </StatusGroup>
        <StatusGroup>
          <ModeButton aria-label="单页"><Icon w={12} h={14}><path d="M.5.500h11v13H.5z" fill="#fff" stroke="#666" /><path d="M3 3.500h6M3 5.500h6M3 7.500h6M3 9.500h6" stroke="#888" /></Icon></ModeButton>
          <ModeButton $on aria-label="连续"><Icon w={12} h={16}><path d="M.5 0v9.500h11V0M.5 16v-4.500h11V16M.5.500h11" fill="#fff" stroke="#555" /><path d="M3 3.500h6M3 6h6M3 14.500h6" stroke="#777" /></Icon></ModeButton>
          <ModeButton aria-label="双页"><Icon w={16} h={12}><path d="M.5.500h6v11h-6z M9.500.500h6v11h-6z" fill="#fff" stroke="#666" /><path d="M2 3.500h3M2 6h3M2 8.500h3M11 3.500h3M11 6h3M11 8.500h3" stroke="#888" /></Icon></ModeButton>
          <ModeButton aria-label="双页连续"><Icon><path d="M0 .5h6.500v8H0M16 .5H9.500v8H16M0 10.500h6.500V16M16 10.500H9.500V16" stroke="#666" /><path d="M1 3h4M1 5.500h4M11 3h4M11 5.500h4M1 13.500h4M11 13.500h4" stroke="#888" /></Icon></ModeButton>
          <ZoomSelect>
            <Select aria-label="缩放比例" defaultValue="100%"><option>100%</option><option>150%</option></Select>
            <Caret />
          </ZoomSelect>
          <button aria-label="缩小"><Circle /></button>
          <Slider type="range" min={0} max={100} defaultValue={50} aria-label="缩放" />
          <button aria-label="放大"><Circle plus /></button>
        </StatusGroup>
      </Status>

      <Dock>
        <Icon w={24} h={54}>
          <circle cx="32" cy="13" r="15" fill="#3a3f52" stroke="#5c6170" />
          <path d="M16 50l3 2 3-2" stroke="#888" />
        </Icon>
      </Dock>
      <Watermark>
        <svg width="44" height="44" viewBox="0 0 44 44" aria-hidden="true">
          <defs>
            <linearGradient id="sky" x1="0" y1="1" x2="1" y2="0">
              <stop offset="0" stopColor="#1d62b0" />
              <stop offset="1" stopColor="#4db4e6" />
            </linearGradient>
            <linearGradient id="leaf" x1="0" y1="1" x2="1" y2="0">
              <stop offset="0" stopColor="#d9dd4a" />
              <stop offset="1" stopColor="#2fae6c" />
            </linearGradient>
          </defs>
          <path d="M43 3C27 0 4 7 2 26c0 6 3 10 7 12C5 25 20 9 43 3z" fill="url(#sky)" />
          <path d="M13 29c0-9 10-15 18-14-5 2-10 6-10 11 0 3 3 3 3 6-2 3-11 3-11-3z" fill="#3f93d2" />
          <path d="M33 15c11 2 12 14 2 21-7 5-18 6-25 3 10 0 19-3 22-9 2-4 0-7-5-8 0-3 3-6 6-7z" fill="url(#leaf)" />
        </svg>
        <div>
          <strong>极光下载站</strong>
          <em>www.xz7.com</em>
        </div>
      </Watermark>
    </Window>
  );
}
